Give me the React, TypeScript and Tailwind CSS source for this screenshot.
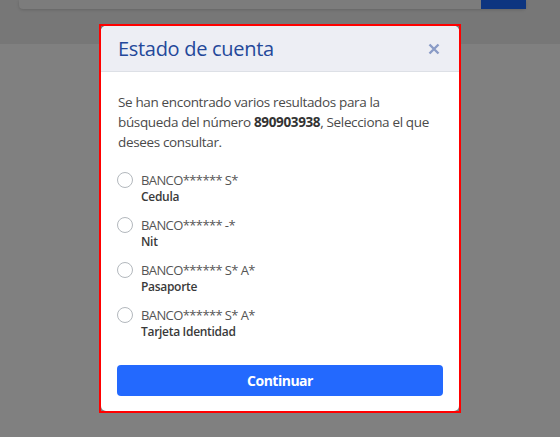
import React from "react";

const options = [
  { name: "BANCO****** S*", type: "Cedula" },
  { name: "BANCO****** -*", type: "Nit" },
  { name: "BANCO****** S* A*", type: "Pasaporte" },
  { name: "BANCO****** S* A*", type: "Tarjeta Identidad" },
];

export default function App() {
  return (
    <div
      className="relative w-[560px] h-[437px] overflow-hidden bg-[#808080]"
      style={{ fontFamily: '"Open Sans", "Noto Sans", Arial, sans-serif' }}
    >
      <div className="h-[44px] bg-[#777777]">
        <div className="ml-[19px] w-[507px] h-[9px] bg-[#7c7c7c] rounded-b-[4px] shadow-[0_1px_3px_rgba(0,0,0,0.15)] flex justify-end">
          <div className="w-[45px] h-[9px] bg-[#0d3580]" />
        </div>
      </div>

      <div className="absolute left-[99px] top-[24px] w-[362px] border-2 border-[#ff0000]">
        <div className="rounded-[5px] bg-white overflow-hidden">
          <div className="h-[46px] bg-[#edeef4] border-b border-[#dde0e6] pl-[17px] pr-[19px] flex items-center justify-between">
            <h2 className="text-[20px] leading-none text-[#24489a] tracking-[-0.3px]">Estado de cuenta</h2>
            <svg width="12" height="12" viewBox="0 0 12 12">
              <path d="M1.5 1.5 L10.5 10.5 M10.5 1.5 L1.5 10.5" stroke="#8a9bc6" strokeWidth="2.4" strokeLinecap="butt" />
            </svg>
          </div>
          <div className="pt-[20px] pb-[15px] px-[16px]">
            <p className="text-[13.5px] leading-[20px] text-[#4a4a4a] pl-[1px] mr-[-12px] tracking-[-0.35px]">
              Se han encontrado varios resultados para la
              <br />
              búsqueda del número{" "}
              <span className="font-bold text-[#333333]">890903938</span>, Selecciona el que
              <br />
              desees consultar.
            </p>
            <div className="mt-[19px] flex flex-col gap-[11px]">
              {options.map((o, i) => (
                <label key={i} className="flex flex-col">
                  <div className="flex items-center h-[18px]">
                    <span className="w-[16px] h-[16px] rounded-full border border-[#b3b8bd] bg-white shrink-0" />
                    <span className="ml-[8px] text-[13px] leading-[18px] text-[#555555] tracking-[-0.6px]">{o.name}</span>
                  </div>
                  <span className="ml-[24px] text-[12px] leading-[16px] font-semibold text-[#3a3a3a] tracking-[-0.3px]">{o.type}</span>
                </label>
              ))}
            </div>
            <button className="mt-[25px] w-full h-[31px] rounded-[4px] bg-[#2369fe] text-white text-[14px] font-bold tracking-[-0.5px] flex items-center justify-center">
              Continuar
            </button>
          </div>
        </div>
      </div>
    </div>
  );
}
